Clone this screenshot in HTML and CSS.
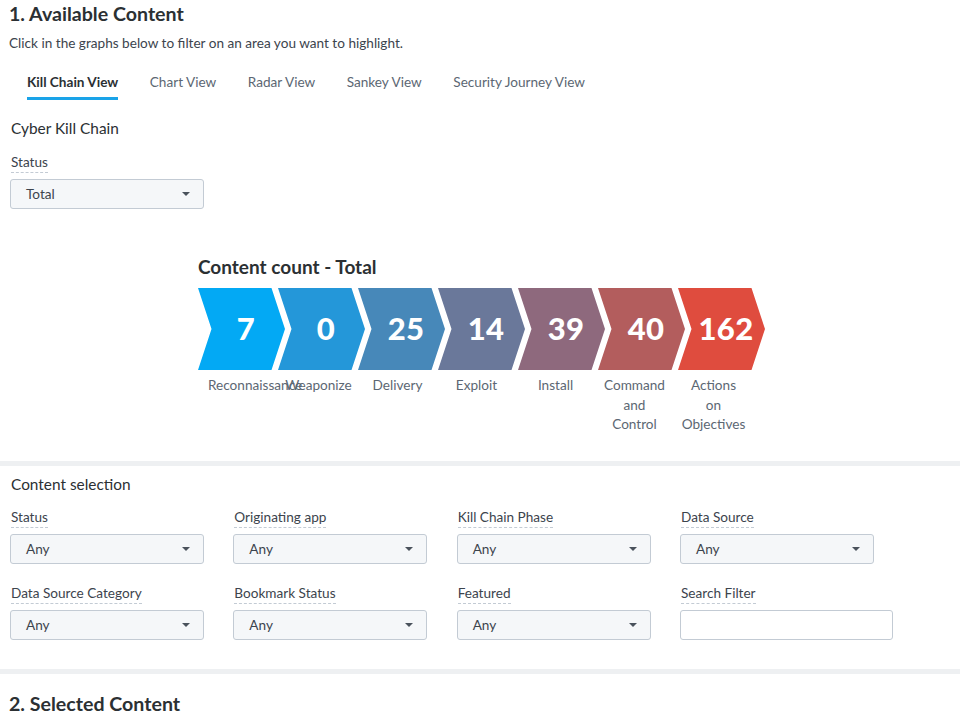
FILE: index.html
```html
<!DOCTYPE html>
<html lang="en">
<head>
<meta charset="utf-8">
<title>Available Content</title>
<link rel="stylesheet" href="styles.css">
</head>
<body>
<section class="panel">
  <h1 class="section-title">1. Available Content</h1>
  <p class="intro">Click in the graphs below to filter on an area you want to highlight.</p>
  <nav class="tabs">
    <a class="tab active">Kill Chain View</a>
    <a class="tab">Chart View</a>
    <a class="tab">Radar View</a>
    <a class="tab">Sankey View</a>
    <a class="tab">Security Journey View</a>
  </nav>
  <h2 class="sub-title">Cyber Kill Chain</h2>
  <div class="field">
    <label class="field-label">Status</label>
    <div class="select"><span>Total</span><i class="caret"></i></div>
  </div>

  <div class="chart">
    <h3 class="chart-title">Content count - Total</h3>
    <div class="chain">
      <div class="chev c1"><span>7</span></div>
      <div class="chev c2"><span>0</span></div>
      <div class="chev c3"><span>25</span></div>
      <div class="chev c4"><span>14</span></div>
      <div class="chev c5"><span>39</span></div>
      <div class="chev c6"><span>40</span></div>
      <div class="chev c7"><span>162</span></div>
    </div>
    <div class="chain-labels">
      <div class="chain-label first"><span>Reconnaissance</span></div>
      <div class="chain-label"><span>Weaponize</span></div>
      <div class="chain-label"><span>Delivery</span></div>
      <div class="chain-label"><span>Exploit</span></div>
      <div class="chain-label"><span>Install</span></div>
      <div class="chain-label"><span>Command</span><span>and</span><span>Control</span></div>
      <div class="chain-label"><span>Actions</span><span>on</span><span>Objectives</span></div>
    </div>
  </div>
</section>

<div class="band"></div>

<section class="panel selection">
  <h2 class="sub-title">Content selection</h2>
  <div class="filters">
    <div class="field">
      <label class="field-label">Status</label>
      <div class="select"><span>Any</span><i class="caret"></i></div>
    </div>
    <div class="field">
      <label class="field-label">Originating app</label>
      <div class="select"><span>Any</span><i class="caret"></i></div>
    </div>
    <div class="field">
      <label class="field-label">Kill Chain Phase</label>
      <div class="select"><span>Any</span><i class="caret"></i></div>
    </div>
    <div class="field">
      <label class="field-label">Data Source</label>
      <div class="select"><span>Any</span><i class="caret"></i></div>
    </div>
    <div class="field">
      <label class="field-label">Data Source Category</label>
      <div class="select"><span>Any</span><i class="caret"></i></div>
    </div>
    <div class="field">
      <label class="field-label">Bookmark Status</label>
      <div class="select"><span>Any</span><i class="caret"></i></div>
    </div>
    <div class="field">
      <label class="field-label">Featured</label>
      <div class="select"><span>Any</span><i class="caret"></i></div>
    </div>
    <div class="field">
      <label class="field-label">Search Filter</label>
      <input class="text-input" type="text">
    </div>
  </div>
</section>

<div class="band"></div>

<section class="panel">
  <h1 class="section-title second">2. Selected Content</h1>
</section>
</body>
</html>
```

FILE: styles.css
```css
* { box-sizing: border-box; }

html, body {
  margin: 0;
  padding: 0;
  background: #ffffff;
  font-family: "Lato", "Liberation Sans", sans-serif;
  color: #3c444d;
  overflow: hidden;
}

.panel {
  padding: 0 10px;
}

.section-title {
  margin: 0 0 0 -1px;
  padding-top: 2px;
  font-size: 19.6px;
  line-height: 24px;
  font-weight: 700;
  color: #2b3033;
}

.section-title.second {
  margin-top: 16px;
}

.intro {
  margin: 9px 0 0 -1px;
  font-size: 13.6px;
  line-height: 16px;
  color: #3c444d;
}

.tabs {
  display: flex;
  gap: 31.5px;
  margin-top: 23px;
  padding-left: 17px;
}

.tab {
  font-size: 13.6px;
  line-height: 16px;
  color: #5c6773;
  padding-bottom: 7px;
  border-bottom: 3px solid transparent;
  cursor: pointer;
}

.tab.active {
  color: #2b3033;
  font-weight: 700;
  border-bottom-color: #1aa3e8;
}

.sub-title {
  margin: 19px 0 0 1px;
  font-size: 15.4px;
  line-height: 18px;
  font-weight: 400;
  color: #2b3033;
}

.field {
  display: flex;
  flex-direction: column;
  align-items: flex-start;
}

.panel > .field {
  margin-top: 17px;
}

.field-label {
  font-size: 13.6px;
  line-height: 16px;
  color: #3c444d;
  padding-bottom: 2px;
  border-bottom: 1px dashed #c3cbd4;
  margin-left: 1px;
}

.select {
  margin-top: 6px;
  width: 194px;
  height: 30px;
  display: flex;
  align-items: center;
  justify-content: space-between;
  padding: 0 13px 0 15px;
  background: #f5f7f9;
  border: 1px solid #c3cbd4;
  border-radius: 3px;
  font-size: 13.6px;
  color: #3c444d;
}

.caret {
  width: 0;
  height: 0;
  border-left: 4px solid transparent;
  border-right: 4px solid transparent;
  border-top: 4px solid #4a525c;
}

.text-input {
  margin-top: 6px;
  width: 213px;
  height: 30px;
  border: 1px solid #c3cbd4;
  border-radius: 3px;
  background: #ffffff;
  font: inherit;
}

.chart {
  margin-top: 48px;
  padding-left: 188px;
  padding-bottom: 26px;
}

.chart-title {
  margin: 0;
  font-size: 19px;
  line-height: 20px;
  font-weight: 700;
  color: #2b3033;
}

.chain {
  display: flex;
  margin-top: 11px;
  height: 82px;
}

.chev {
  width: 87px;
  height: 82px;
  margin-right: -7px;
  clip-path: polygon(0 0, 73.5px 0, 87px 50%, 73.5px 100%, 0 100%, 13.5px 50%);
  display: flex;
  align-items: center;
  justify-content: center;
  padding-left: 9px;
  padding-bottom: 3px;
  color: #ffffff;
  font-size: 31px;
  font-weight: 900;
  letter-spacing: 0.3px;
}

.c1 { background: #03a9f4; }
.c2 { background: #2497d9; }
.c3 { background: #4788b9; }
.c4 { background: #6a789a; }
.c5 { background: #8e697d; }
.c6 { background: #b35d5d; }
.c7 { background: #df4c3e; }

.chain-labels {
  display: flex;
  margin-top: 6px;
  margin-left: 2px;
}

.chain-label {
  width: 79px;
  display: flex;
  flex-direction: column;
  align-items: center;
  font-size: 13.6px;
  line-height: 19.5px;
  color: #5c6773;
  white-space: nowrap;
}

.chain-label.first {
  align-items: flex-start;
  padding-left: 8px;
}

.band {
  height: 5px;
  background: #eef0f2;
}

.selection .sub-title {
  margin-top: 9px;
}

.filters {
  display: grid;
  grid-template-columns: repeat(4, 194px);
  column-gap: 29.33px;
  row-gap: 21px;
  margin-top: 16px;
  padding-bottom: 29px;
}
```
